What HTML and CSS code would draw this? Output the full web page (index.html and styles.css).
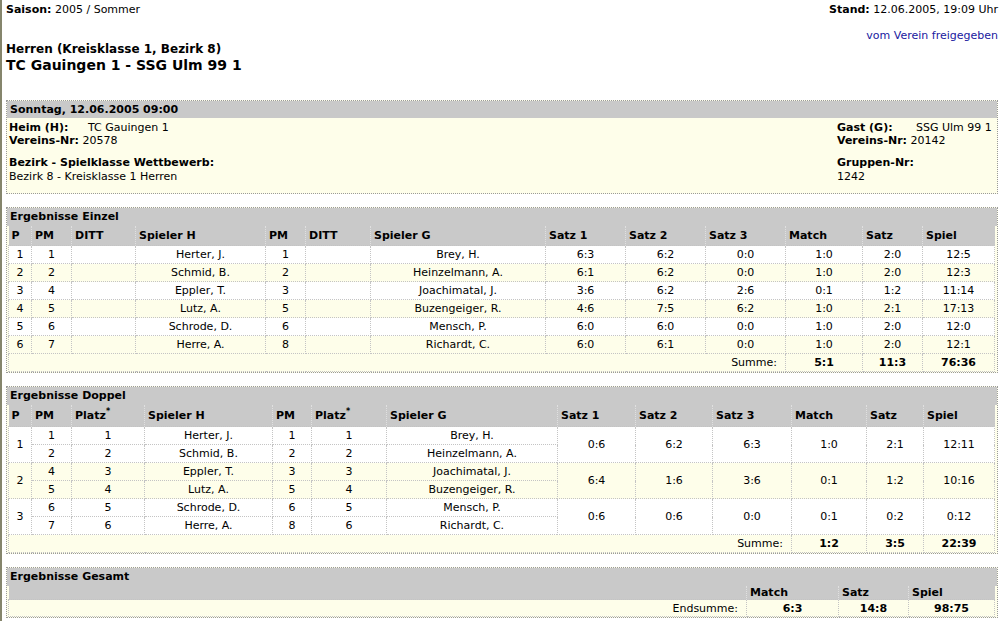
FILE: index.html
```html
<!DOCTYPE html>
<html lang="de">
<head>
<meta charset="utf-8">
<title>TC Gauingen 1 - SSG Ulm 99 1</title>
<link rel="stylesheet" href="styles.css">
</head>
<body>
<div class="page">
  <div class="top">
    <div class="saison"><b>Saison:</b> 2005 / Sommer</div>
    <div class="stand">
      <div><b>Stand:</b> 12.06.2005, 19:09 Uhr</div>
      <a class="link" href="#">vom Verein freigegeben</a>
    </div>
  </div>
  <h2 class="liga">Herren (Kreisklasse 1, Bezirk 8)</h2>
  <h1 class="match">TC Gauingen 1 - SSG Ulm 99 1</h1>

  <section class="box info">
    <div class="bar">Sonntag, 12.06.2005 09:00</div>
    <div class="info-body">
      <div class="info-col">
        <div><b class="lbl">Heim (H):</b>TC Gauingen 1</div>
        <div><b>Vereins-Nr:</b> 20578</div>
        <div class="gap"><b>Bezirk - Spielklasse Wettbewerb:</b></div>
        <div class="last">Bezirk 8 - Kreisklasse 1 Herren</div>
      </div>
      <div class="info-col right">
        <div><b class="lbl">Gast (G):</b>SSG Ulm 99 1</div>
        <div><b>Vereins-Nr:</b> 20142</div>
        <div class="gap"><b>Gruppen-Nr:</b></div>
        <div class="last">1242</div>
      </div>
    </div>
  </section>

  <section class="box">
    <div class="bar">Ergebnisse Einzel</div>
    <table class="res sgl">
      <colgroup>
        <col style="width:23px"><col style="width:40px"><col style="width:64px"><col style="width:130px"><col style="width:40px"><col style="width:65px"><col style="width:175px"><col style="width:80px"><col style="width:80px"><col style="width:80px"><col style="width:77px"><col style="width:60px"><col style="width:72px">
      </colgroup>
      <thead>
        <tr><th>P</th><th>PM</th><th>DITT</th><th>Spieler H</th><th>PM</th><th>DITT</th><th>Spieler G</th><th>Satz 1</th><th>Satz 2</th><th>Satz 3</th><th>Match</th><th>Satz</th><th>Spiel</th></tr>
      </thead>
      <tbody>
        <tr class="w"><td>1</td><td>1</td><td></td><td>Herter, J.</td><td>1</td><td></td><td>Brey, H.</td><td>6:3</td><td>6:2</td><td>0:0</td><td>1:0</td><td>2:0</td><td>12:5</td></tr>
        <tr class="y"><td>2</td><td>2</td><td></td><td>Schmid, B.</td><td>2</td><td></td><td>Heinzelmann, A.</td><td>6:1</td><td>6:2</td><td>0:0</td><td>1:0</td><td>2:0</td><td>12:3</td></tr>
        <tr class="w"><td>3</td><td>4</td><td></td><td>Eppler, T.</td><td>3</td><td></td><td>Joachimatal, J.</td><td>3:6</td><td>6:2</td><td>2:6</td><td>0:1</td><td>1:2</td><td>11:14</td></tr>
        <tr class="y"><td>4</td><td>5</td><td></td><td>Lutz, A.</td><td>5</td><td></td><td>Buzengeiger, R.</td><td>4:6</td><td>7:5</td><td>6:2</td><td>1:0</td><td>2:1</td><td>17:13</td></tr>
        <tr class="w"><td>5</td><td>6</td><td></td><td>Schrode, D.</td><td>6</td><td></td><td>Mensch, P.</td><td>6:0</td><td>6:0</td><td>0:0</td><td>1:0</td><td>2:0</td><td>12:0</td></tr>
        <tr class="y"><td>6</td><td>7</td><td></td><td>Herre, A.</td><td>8</td><td></td><td>Richardt, C.</td><td>6:0</td><td>6:1</td><td>0:0</td><td>1:0</td><td>2:0</td><td>12:1</td></tr>
        <tr class="sum"><td colspan="10" class="sumlbl">Summe:</td><td><b>5:1</b></td><td><b>11:3</b></td><td><b>76:36</b></td></tr>
      </tbody>
    </table>
  </section>

  <section class="box">
    <div class="bar">Ergebnisse Doppel</div>
    <table class="res dbl">
      <colgroup>
        <col style="width:23px"><col style="width:40px"><col style="width:73px"><col style="width:128px"><col style="width:39px"><col style="width:75px"><col style="width:171px"><col style="width:78px"><col style="width:77px"><col style="width:79px"><col style="width:75px"><col style="width:57px"><col style="width:71px">
      </colgroup>
      <thead>
        <tr><th>P</th><th>PM</th><th>Platz<sup>*</sup></th><th>Spieler H</th><th>PM</th><th>Platz<sup>*</sup></th><th>Spieler G</th><th>Satz 1</th><th>Satz 2</th><th>Satz 3</th><th>Match</th><th>Satz</th><th>Spiel</th></tr>
      </thead>
      <tbody>
        <tr class="w"><td rowspan="2">1</td><td>1</td><td>1</td><td>Herter, J.</td><td>1</td><td>1</td><td>Brey, H.</td><td rowspan="2">0:6</td><td rowspan="2">6:2</td><td rowspan="2">6:3</td><td rowspan="2">1:0</td><td rowspan="2">2:1</td><td rowspan="2">12:11</td></tr>
        <tr class="w"><td>2</td><td>2</td><td>Schmid, B.</td><td>2</td><td>2</td><td>Heinzelmann, A.</td></tr>
        <tr class="y"><td rowspan="2">2</td><td>4</td><td>3</td><td>Eppler, T.</td><td>3</td><td>3</td><td>Joachimatal, J.</td><td rowspan="2">6:4</td><td rowspan="2">1:6</td><td rowspan="2">3:6</td><td rowspan="2">0:1</td><td rowspan="2">1:2</td><td rowspan="2">10:16</td></tr>
        <tr class="y"><td>5</td><td>4</td><td>Lutz, A.</td><td>5</td><td>4</td><td>Buzengeiger, R.</td></tr>
        <tr class="w"><td rowspan="2">3</td><td>6</td><td>5</td><td>Schrode, D.</td><td>6</td><td>5</td><td>Mensch, P.</td><td rowspan="2">0:6</td><td rowspan="2">0:6</td><td rowspan="2">0:0</td><td rowspan="2">0:1</td><td rowspan="2">0:2</td><td rowspan="2">0:12</td></tr>
        <tr class="w"><td>7</td><td>6</td><td>Herre, A.</td><td>8</td><td>6</td><td>Richardt, C.</td></tr>
        <tr class="sum"><td colspan="10" class="sumlbl">Summe:</td><td><b>1:2</b></td><td><b>3:5</b></td><td><b>22:39</b></td></tr>
      </tbody>
    </table>
  </section>

  <section class="box">
    <div class="bar">Ergebnisse Gesamt</div>
    <table class="res tot">
      <colgroup>
        <col style="width:738px"><col style="width:92px"><col style="width:70px"><col style="width:86px">
      </colgroup>
      <thead>
        <tr><th></th><th>Match</th><th>Satz</th><th>Spiel</th></tr>
      </thead>
      <tbody>
        <tr class="sum"><td class="sumlbl">Endsumme:</td><td><b>6:3</b></td><td><b>14:8</b></td><td><b>98:75</b></td></tr>
      </tbody>
    </table>
  </section>
</div>
</body>
</html>
```

FILE: styles.css
```css
html {
  margin: 0;
  padding: 0;
  background: #ffffff;
}
body {
  margin: 0;
  min-height: 621px;
  box-sizing: border-box;
  border-left: 2px solid #85856c;
  font-family: "DejaVu Sans", Verdana, sans-serif;
  font-size: 11px;
  line-height: 13px;
  color: #000;
}
.page {
  padding: 3px 4px 0 4px;
}
.top {
  display: flex;
  justify-content: space-between;
  align-items: flex-start;
}
.stand {
  text-align: right;
}
.link {
  display: block;
  margin-top: 13px;
  color: #2020a0;
  text-decoration: none;
}
.liga {
  margin: 0;
  font-size: 12px;
  line-height: 14px;
  font-weight: bold;
}
.match {
  margin: 0;
  font-size: 14px;
  line-height: 18px;
  font-weight: bold;
}
.box {
  margin-top: 13px;
  border: 1px dotted #9a9a9a;
  background: #fefeea;
}
.box.info {
  margin-top: 26px;
}
.bar {
  background: #c9c9c9;
  font-weight: bold;
  padding: 2px 3px 2px 3px;
  height: 14px;
  line-height: 14px;
}
.info .bar {
  height: 13px;
  line-height: 13px;
}
.info-body {
  display: flex;
  justify-content: space-between;
  padding: 3px 2px 10px 2px;
}
.info-col.right {
  width: 158px;
}
.lbl {
  display: inline-block;
  width: 79px;
}
.gap {
  margin-top: 9px;
}
.last {
  margin-top: 1px;
}
.res {
  border-collapse: collapse;
  table-layout: fixed;
  margin: 0 0 0 1px;
}
.res th {
  background: #c9c9c9;
  text-align: left;
  font-weight: bold;
  padding: 2px 3px;
  height: 15px;
  line-height: 15px;
  border-left: 1px dotted #e0e0e0;
  white-space: nowrap;
}
.res th:first-child {
  border-left: none;
}
.res td {
  text-align: center;
  padding: 0 3px;
  height: 17px;
  line-height: 13px;
  border: 1px dotted #c4c4c4;
  white-space: nowrap;
}
.res tr.w td {
  background: #ffffff;
}
.res tr.y td {
  background: #fefeea;
}
.res tr.sum td {
  background: #fefeea;
}
.res td.sumlbl {
  text-align: right;
  padding-right: 8px;
}
.res sup {
  font-size: 8px;
  line-height: 0;
  vertical-align: 5px;
}
.dbl th {
  height: 17px;
  line-height: 17px;
}
.tot th {
  padding: 0 3px;
  height: 13px;
  line-height: 13px;
}
.tot td {
  height: 16px;
}
```
